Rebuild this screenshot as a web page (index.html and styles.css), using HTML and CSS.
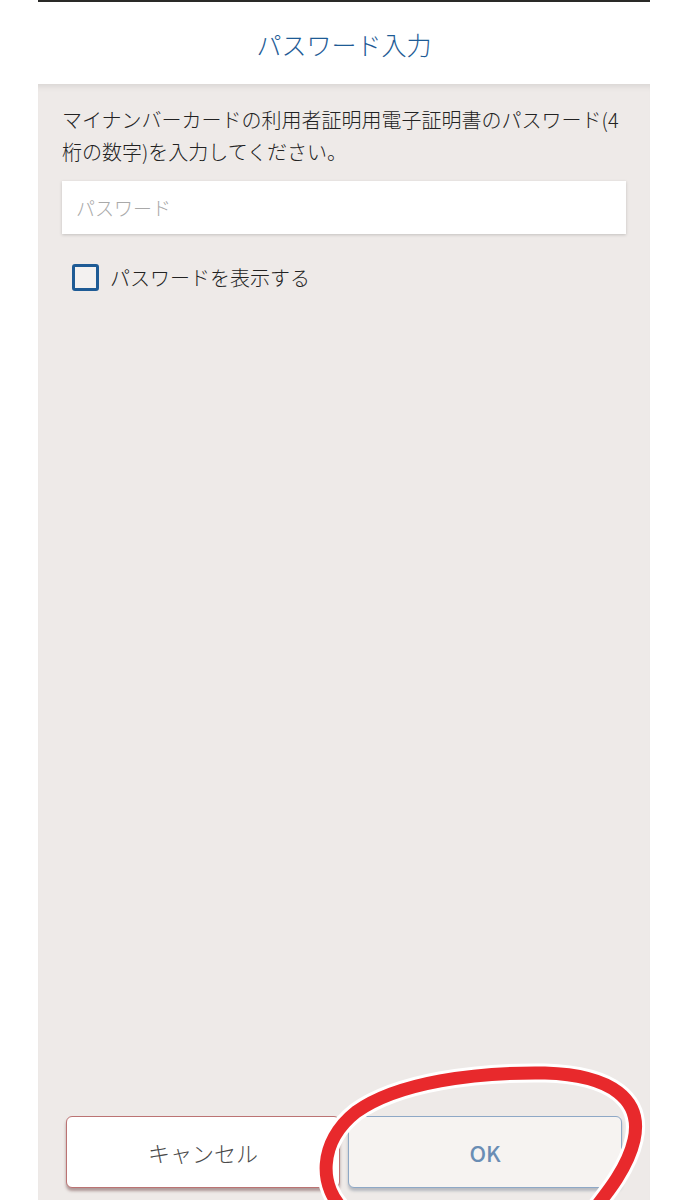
FILE: index.html
```html
<!DOCTYPE html>
<html lang="ja">
<head>
<meta charset="utf-8">
<title>パスワード入力</title>
<link rel="stylesheet" href="styles.css">
</head>
<body>
<div class="screen">
  <div class="dialog">
    <div class="topline"></div>
    <header class="header">
      <h1 class="title">パスワード入力</h1>
    </header>
    <main class="content">
      <p class="desc">マイナンバーカードの利用者証明用電子証明書のパスワード(4桁の数字)を入力してください。</p>
      <div class="input"><span class="placeholder">パスワード</span></div>
      <label class="check">
        <span class="box"></span>
        <span class="check-label">パスワードを表示する</span>
      </label>
      <div class="actions">
        <button class="btn btn-cancel">キャンセル</button>
        <button class="btn btn-ok">OK</button>
      </div>
    </main>
  </div>
  <svg class="mark" width="675" height="1200" viewBox="0 0 675 1200" xmlns="http://www.w3.org/2000/svg">
    <path d="M346 1212 C 318 1188, 318 1142, 356 1112 C 398 1082, 476 1072, 545 1073 C 612 1075, 643 1100, 634 1140 C 628 1167, 608 1192, 592 1212" fill="none" stroke="#ffffff" stroke-width="19" stroke-linecap="round"/>
    <path d="M346 1212 C 318 1188, 318 1142, 356 1112 C 398 1082, 476 1072, 545 1073 C 612 1075, 643 1100, 634 1140 C 628 1167, 608 1192, 592 1212" fill="none" stroke="#e8292c" stroke-width="13" stroke-linecap="round"/>
  </svg>
</div>
</body>
</html>
```

FILE: styles.css
```css
* { box-sizing: border-box; }
html, body { margin: 0; padding: 0; background: #ffffff; }
body {
  font-family: "Noto Sans CJK JP", "Noto Sans", sans-serif;
  width: 675px;
  height: 1200px;
  overflow: hidden;
}
.screen {
  position: relative;
  width: 675px;
  height: 1200px;
  padding-left: 38px;
  padding-right: 25px;
}
.dialog {
  display: flex;
  flex-direction: column;
  height: 1200px;
  width: 612px;
  background: #ffffff;
}
.topline {
  height: 2px;
  background: #2a2a28;
}
.header {
  height: 82px;
  display: flex;
  align-items: center;
  justify-content: center;
  background: #ffffff;
}
.title {
  margin: 0;
  font-size: 25px;
  font-weight: 300;
  color: #1e5b95;
  letter-spacing: 0;
  padding-top: 2px;
}
.content {
  flex: 1;
  display: flex;
  flex-direction: column;
  background: #eeeae8;
  padding: 20px 24px 12px 24px;
  box-shadow: inset 0 7px 6px -5px rgba(0,0,0,0.10);
}
.desc {
  margin: 0;
  font-size: 20px;
  font-weight: 300;
  line-height: 32px;
  color: #222222;
}
.input {
  margin-top: 13px;
  height: 53px;
  background: #ffffff;
  display: flex;
  align-items: center;
  padding-left: 14px;
  box-shadow: 0 1px 3px rgba(0,0,0,0.18);
}
.placeholder {
  font-size: 19px;
  font-weight: 300;
  color: #a9a9a9;
}
.check {
  margin-top: 29px;
  margin-left: 10px;
  display: flex;
  align-items: center;
  gap: 11px;
}
.box {
  width: 27px;
  height: 27px;
  border: 3px solid #1e5b95;
  border-radius: 3px;
  background: #f3f1f0;
}
.check-label {
  font-size: 20px;
  font-weight: 300;
  color: #222222;
}
.actions {
  margin-top: auto;
  display: flex;
  gap: 8px;
  padding: 0 4px;
}
.btn {
  flex: 1;
  height: 72px;
  border-radius: 6px;
  font-family: "Noto Sans CJK JP", "Noto Sans", sans-serif;
  font-size: 22px;
  padding: 0;
}
.btn-cancel {
  background: #ffffff;
  border: 1.5px solid #bb7373;
  color: #4a4a4a;
  font-weight: 300;
  box-shadow: 0 3px 3px rgba(80,30,30,0.4);
}
.btn-ok {
  background: #f6f3f1;
  border: 1.5px solid #8ea8c6;
  color: #6a8db4;
  font-weight: 500;
  box-shadow: 0 3px 3px rgba(40,60,90,0.28);
}
.mark {
  position: absolute;
  left: 0;
  top: 0;
  pointer-events: none;
}
```
